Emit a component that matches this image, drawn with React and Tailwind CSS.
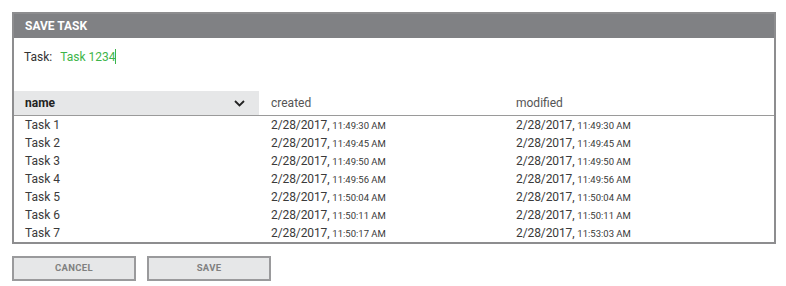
import React from "react";

const rows = [
  ["Task 1", "11:49:30 AM", "11:49:30 AM"],
  ["Task 2", "11:49:45 AM", "11:49:45 AM"],
  ["Task 3", "11:49:50 AM", "11:49:50 AM"],
  ["Task 4", "11:49:56 AM", "11:49:56 AM"],
  ["Task 5", "11:50:04 AM", "11:50:04 AM"],
  ["Task 6", "11:50:11 AM", "11:50:11 AM"],
  ["Task 7", "11:50:17 AM", "11:53:03 AM"],
];

function DateCell({ time }) {
  return (
    <div className="pl-[12px] flex items-baseline">
      <span className="text-[12px] tracking-[-0.1px]">2/28/2017,&nbsp;</span>
      <span className="text-[9.5px]">{time}</span>
    </div>
  );
}

export default function App() {
  return (
    <div
      className="w-[786px] h-[286px] bg-white text-[#3a3a3a] overflow-hidden"
      style={{ fontFamily: "Roboto, 'Liberation Sans', sans-serif" }}
    >
      <div className="pt-[12px] pl-[12px] w-[776px]">
        <div className="border-2 border-[#8d8d8f] bg-white">
          <div className="h-[24px] bg-[#808184] flex items-center pl-[11px] text-white text-[12px] font-bold">
            SAVE TASK
          </div>
          <div className="h-[53px] flex items-start pt-[10px] pl-[10px] text-[12px]">
            <span className="text-[#333]">Task:</span>
            <span className="ml-[8px] text-[#3db54a]">Task 1234</span>
            <span className="w-px h-[15px] bg-[#3db54a] mt-[1px]"></span>
          </div>
          <div className="grid grid-cols-[245px_246px_1fr] h-[25px] border-b border-[#9a9a9a] text-[12px]">
            <div className="bg-[#e6e7e8] flex items-center justify-between pl-[11px] pr-[14px] font-bold text-[#222]">
              <span>name</span>
              <svg width="11" height="7" viewBox="0 0 11 7">
                <path d="M1 1 L5.5 5.5 L10 1" stroke="#222" strokeWidth="1.8" fill="none" />
              </svg>
            </div>
            <div className="flex items-center pl-[12px] text-[#555]">created</div>
            <div className="flex items-center pl-[11px] text-[#555]">modified</div>
          </div>
          {rows.map((r) => (
            <div key={r[0]} className="grid grid-cols-[245px_246px_1fr] h-[18px] items-center">
              <div className="pl-[11px] text-[12px]">{r[0]}</div>
              <DateCell time={r[1]} />
              <div className="-ml-px">
                <DateCell time={r[2]} />
              </div>
            </div>
          ))}
        </div>
        <div className="flex gap-[11px] mt-[12px]">
          <button className="w-[124px] h-[25px] bg-[#e6e7e8] border-2 border-[#9a9a9c] text-[9.5px] font-bold text-[#808080] tracking-[0.3px]">
            CANCEL
          </button>
          <button className="w-[124px] h-[25px] bg-[#e6e7e8] border-2 border-[#9a9a9c] text-[9.5px] font-bold text-[#808080] tracking-[0.3px]">
            SAVE
          </button>
        </div>
      </div>
    </div>
  );
}
